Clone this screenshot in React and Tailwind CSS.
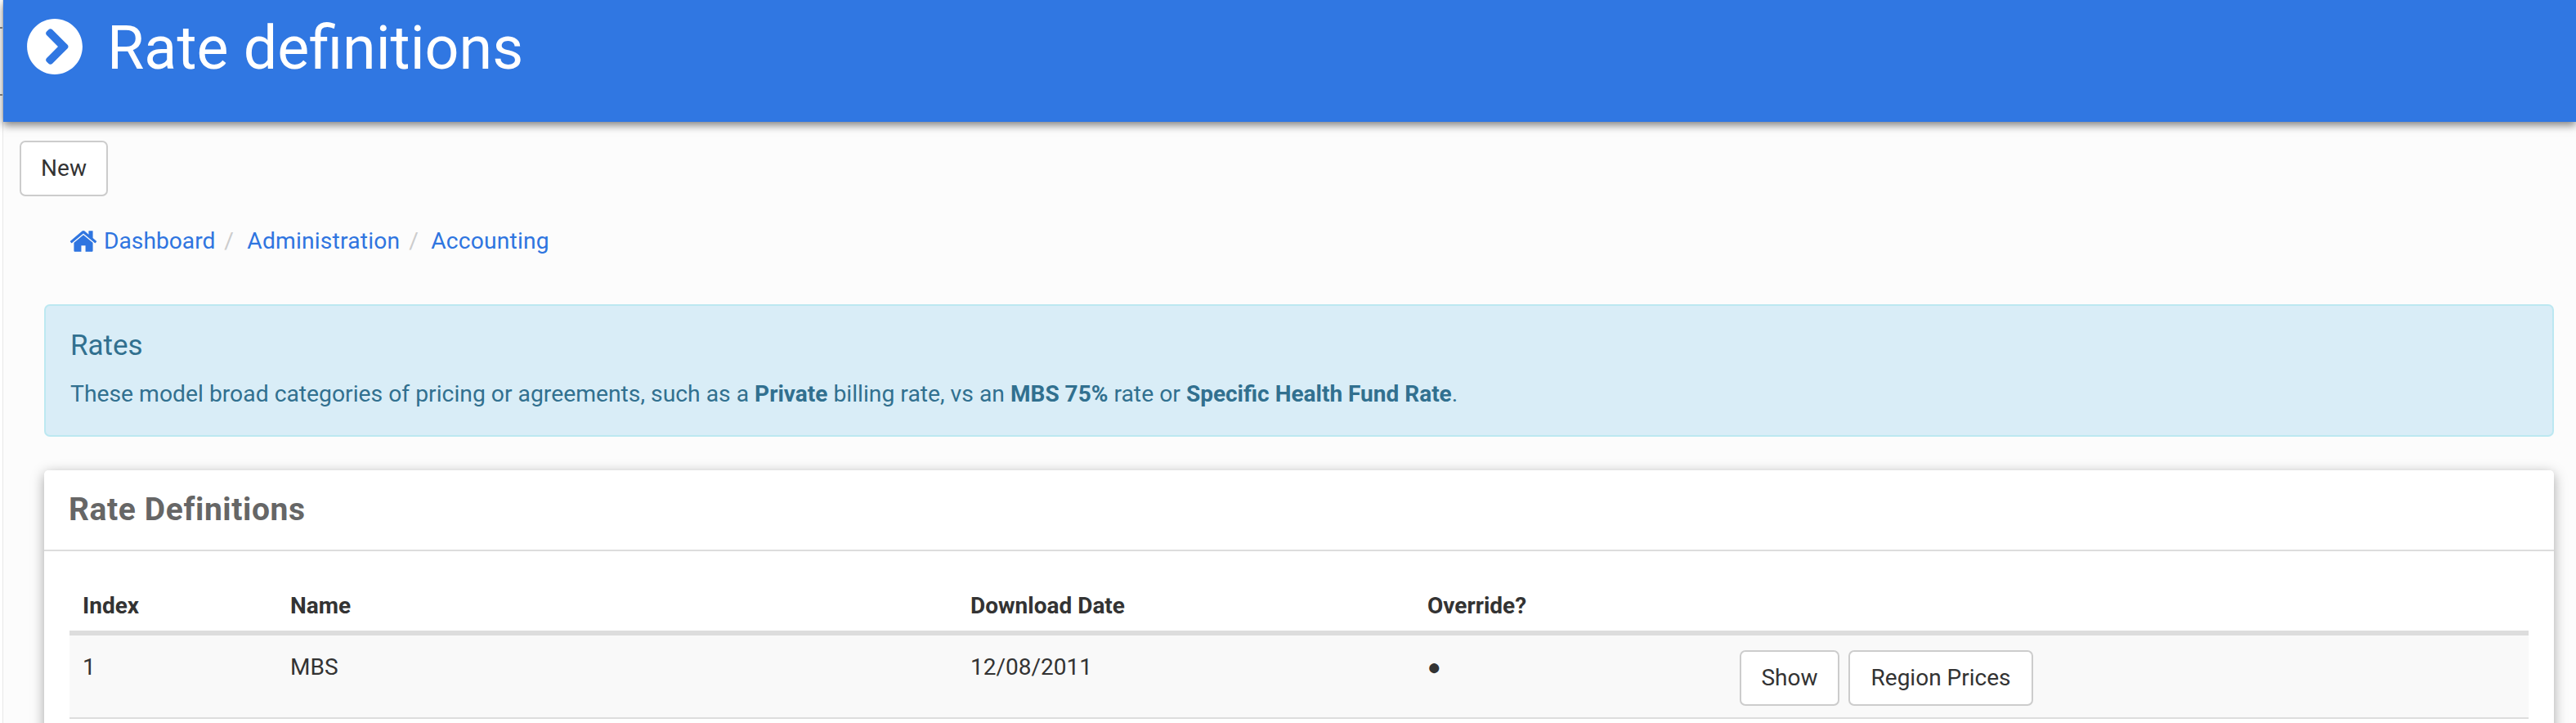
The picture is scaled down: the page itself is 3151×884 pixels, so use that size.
import React from "react";
import { FaChevronCircleRight } from "react-icons/fa";

const Btn = ({ children, className = "" }) => (
  <button className={"h-[68px] bg-white border-2 border-[#cccccc] rounded-[7px] text-[28px] text-[#333333] " + className}>
    {children}
  </button>
);

const HomeIcon = () => (
  <svg viewBox="0 0 1792 1792" className="w-[36px] h-[36px] fill-current mr-[7px] -ml-[1px]">
    <path d="M1472 992v480q0 26-19 45t-45 19h-384v-384h-256v384h-384q-26 0-45-19t-19-45v-480q0-1 .5-3t.5-3l575-474 575 474q1 2 1 6zm223-69l-62 74q-8 9-21 11h-3q-13 0-21-7l-692-577-692 577q-12 8-24 7-13-2-21-11l-62-74q-8-10-7-23.5t11-21.5l719-599q32-26 76-26t76 26l244 204v-195q0-14 9-23t23-9h192q14 0 23 9t9 23v408l219 182q10 8 11 21.5t-7 23.5z" />
  </svg>
);

const App = () => {
  return (
    <div className="relative h-[884px] overflow-hidden bg-white font-['Roboto',sans-serif] text-[28px] text-[#333333]">
      <div className="absolute left-0 top-[33px] w-[3px] h-[2px] bg-[#777777]"></div>
      <div className="absolute left-0 top-[115px] w-[3px] h-[2px] bg-[#777777]"></div>
      <div className="ml-[3px] border-l border-[#e8e8e8] h-full bg-[#fcfcfc]">
        {/* header */}
        <div className="h-[149px] bg-[#3077e2] text-white flex items-start pt-[22px] pl-[28px] shadow-[0_4px_10px_rgba(0,0,0,0.5)]">
          <FaChevronCircleRight className="w-[70px] h-[70px]" />
          <h1 className="ml-[29px] text-[73.6px] leading-[74px] font-normal">Rate definitions</h1>
        </div>

        <div className="pl-[20px] pt-[23px]">
          <Btn className="w-[108px]">New</Btn>
        </div>

        <div className="flex items-center pl-[81px] mt-[35px] h-[40px] text-[28.2px] text-[#2f75e0]">
          <HomeIcon />
          <span>Dashboard</span>
          <span className="text-[#cccccc] w-[39px] pl-[11px]">/</span>
          <span className="tracking-[0.2px]">Administration</span>
          <span className="text-[#cccccc] w-[38px] pl-[11px]">/</span>
          <span className="tracking-[0.2px]">Accounting</span>
        </div>

        <div className="pl-[50px] pr-[27px] mt-[57px]">
          <div className="h-[162px] bg-[#d9edf7] border-2 border-[#bce8f1] rounded-[7px] text-[#31708f] pl-[30px] pt-[28px]">
            <h4 className="text-[35px] leading-[42px]">Rates</h4>
            <p className="mt-[18px] leading-[40px] text-[28.3px]">
              These model broad categories of pricing or agreements, such as a <b className="font-bold text-[28px]">Private</b> billing rate, vs an <b className="font-bold text-[28px]">MBS 75%</b> rate or <b className="font-bold text-[28px]">Specific Health Fund Rate</b>.
            </p>
          </div>

          <div className="mt-[41px] bg-white rounded-[5px] shadow-[0_4px_16px_rgba(0,0,0,0.35)] h-[400px]">
            <div className="h-[99px] border-b-2 border-[#dddddd] pl-[30px] pt-[27px] text-[39px] leading-[42px] font-bold tracking-[0.6px] text-[#666666]">
              Rate Definitions
            </div>
            <div className="px-[31px] pt-[36px]">
              <table className="w-full table-fixed border-collapse text-left">
                <thead>
                  <tr className="h-[64px] border-b-[6px] border-[#dddddd]">
                    <th className="w-[254px] pl-[16px] font-bold">Index</th>
                    <th className="w-[832px] pl-[16px] font-bold">Name</th>
                    <th className="w-[559px] pl-[16px] font-bold">Download Date</th>
                    <th className="w-[382px] pl-[16px] font-bold">Override?</th>
                    <th></th>
                  </tr>
                </thead>
                <tbody>
                  <tr className="h-[104px] bg-[#f9f9f9] border-b-2 border-[#dddddd]">
                    <td className="pl-[16px] align-top pt-[18px]">1</td>
                    <td className="pl-[16px] align-top pt-[18px]">MBS</td>
                    <td className="pl-[16px] align-top pt-[18px]">12/08/2011</td>
                    <td className="pl-[16px] align-top pt-[18px]">●</td>
                    <td className="pl-[16px] align-top pt-[18px]">
                      <Btn className="w-[122px]">Show</Btn>
                      <Btn className="w-[226px] ml-[11px]">Region Prices</Btn>
                    </td>
                  </tr>
                </tbody>
              </table>
            </div>
          </div>
        </div>
      </div>
    </div>
  );
};

export default App;
